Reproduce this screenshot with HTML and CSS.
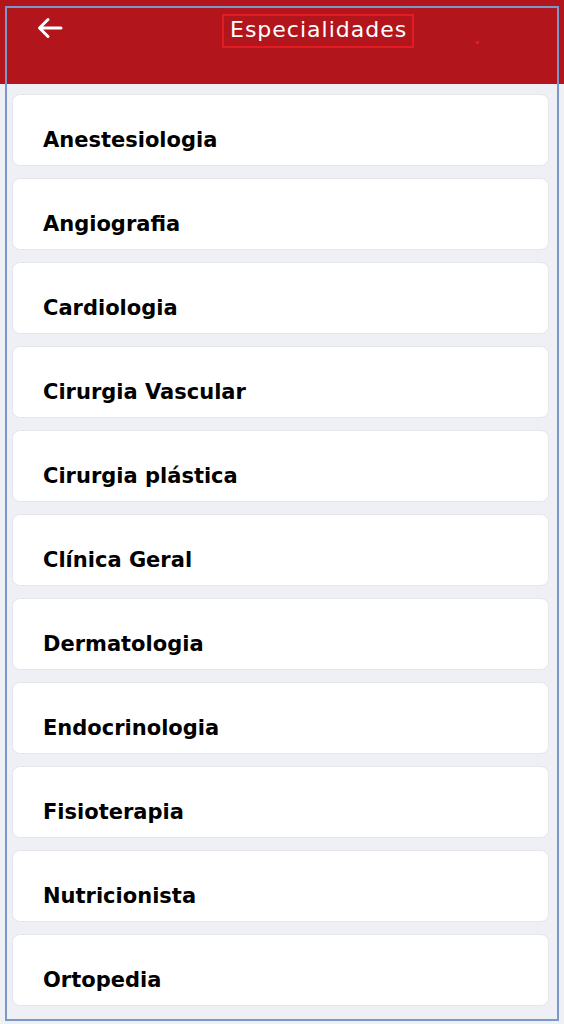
FILE: index.html
```html
<!DOCTYPE html>
<html lang="pt">
<head>
<meta charset="utf-8">
<title>Especialidades</title>
<link rel="stylesheet" href="styles.css">
</head>
<body>
<div class="app">
  <header class="topbar">
    <button class="back" aria-label="Voltar">
      <svg width="26" height="22" viewBox="0 0 26 22"><path d="M24 11H3M11 2.5L2.5 11L11 19.5" fill="none" stroke="#fff" stroke-width="3" stroke-linecap="round" stroke-linejoin="round"/></svg>
    </button>
    <h1 class="title">Especialidades</h1>
    <span class="dot"></span>
  </header>
  <ul class="list">
    <li class="item">Anestesiologia</li>
    <li class="item">Angiografia</li>
    <li class="item">Cardiologia</li>
    <li class="item">Cirurgia Vascular</li>
    <li class="item">Cirurgia plástica</li>
    <li class="item">Clínica Geral</li>
    <li class="item">Dermatologia</li>
    <li class="item">Endocrinologia</li>
    <li class="item">Fisioterapia</li>
    <li class="item">Nutricionista</li>
    <li class="item">Ortopedia</li>
  </ul>
  <div class="frame"></div>
</div>
</body>
</html>
```
FILE: styles.css
```css
* { box-sizing: border-box; }
html, body { margin: 0; padding: 0; }
body {
  background: #eef0f5;
  font-family: "DejaVu Sans", "Noto Sans", sans-serif;
  width: 564px;
  height: 1024px;
  overflow: hidden;
}
.app { position: relative; height: 1024px; }
.topbar {
  position: relative;
  height: 84px;
  background: #b3151c;
  display: flex;
  align-items: flex-start;
  padding-top: 14px;
}
.back {
  background: none;
  border: 0;
  padding: 0;
  margin: 3px 0 0 37px;
  width: 26px;
  height: 22px;
  display: block;
}
.back svg { display: block; }
.title {
  margin: 0 0 0 159px;
  border: 2px solid #e51b24;
  width: 192px;
  height: 34px;
  color: #fff;
  font-weight: 400;
  font-size: 22px;
  line-height: 28px;
  padding-left: 6px;
  letter-spacing: 1px;
  white-space: nowrap;
}
.dot {
  position: absolute;
  left: 476px;
  top: 41px;
  width: 3px;
  height: 3px;
  background: #e51b24;
}
.list {
  list-style: none;
  margin: 0;
  padding: 10px 15px 0 12px;
  display: flex;
  flex-direction: column;
  gap: 12px;
}
.item {
  height: 72px;
  background: #fff;
  border: 1px solid #e4e6eb;
  border-radius: 8px;
  padding: 33px 0 0 30px;
  font-weight: 700;
  font-size: 21px;
  line-height: 24px;
  color: #000;
}
.frame {
  position: absolute;
  left: 5px;
  top: 6px;
  width: 554px;
  height: 1015px;
  border: 2px solid #7a99c9;
  pointer-events: none;
}
```
